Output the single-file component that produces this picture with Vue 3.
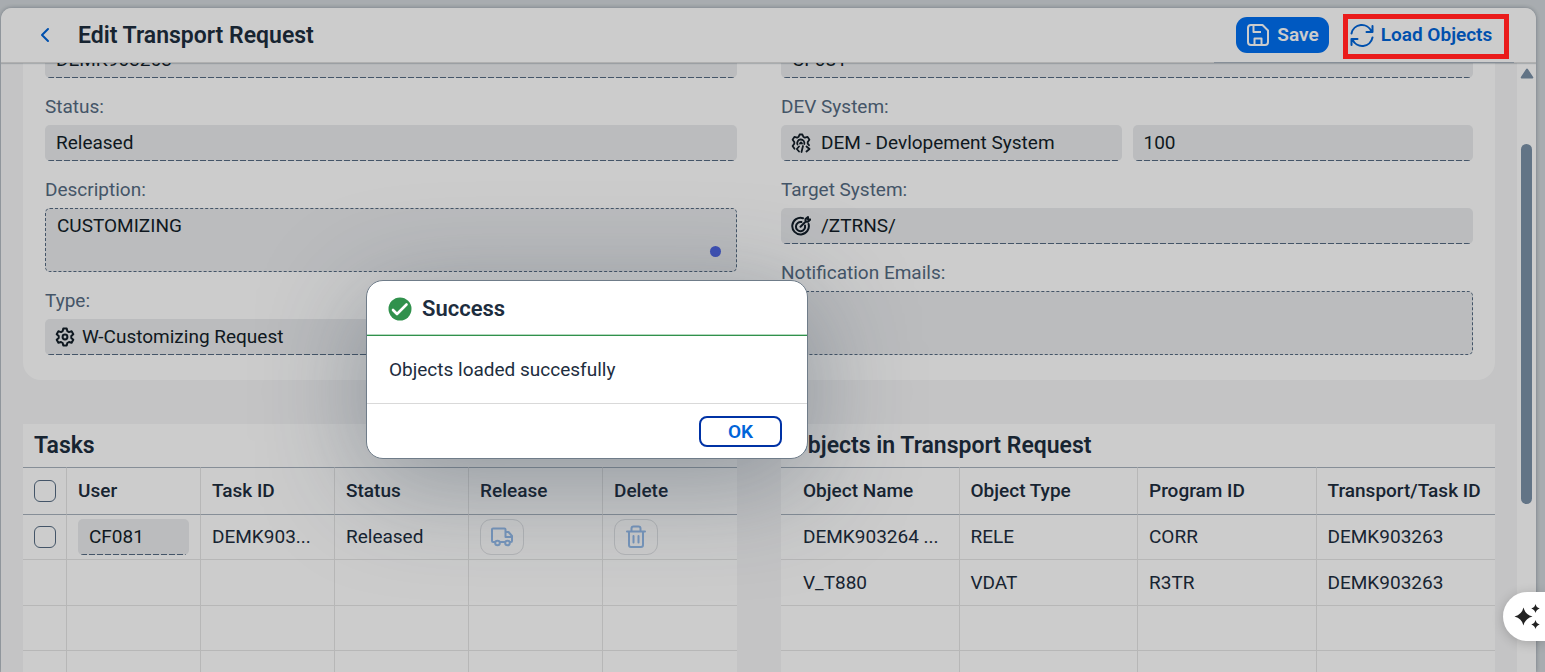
<script setup>
import { ref } from 'vue'

const requestId = ref('DEMK903263')
const owner = ref('CF081')
const status = ref('Released')
const description = ref('CUSTOMIZING')
const requestType = ref('W-Customizing Request')
const devSystem = ref('DEM - Devlopement System')
const client = ref('100')
const target = ref('/ZTRNS/')
const emails = ref('')
const taskUser = ref('CF081')

const objectColumns = ['Object Name', 'Object Type', 'Program ID', 'Transport/Task ID']
const objects = [
  ['DEMK903264 ...', 'RELE', 'CORR', 'DEMK903263'],
  ['V_T880', 'VDAT', 'R3TR', 'DEMK903263'],
  ['', '', '', ''],
  ['', '', '', ''],
  ['', '', '', '']
]
</script>

<template>
  <div class="shell">
    <main class="window">
      <header class="bar">
        <button class="back" type="button" aria-label="Back">
          <svg viewBox="0 0 12 16" width="12" height="16"><path d="M9 2 3 8l6 6" fill="none" stroke="currentColor" stroke-width="2" stroke-linecap="round" stroke-linejoin="round" /></svg>
        </button>
        <h1>Edit Transport Request</h1>
        <div class="actions">
          <button class="save" type="button">
            <svg viewBox="0 0 24 24" width="24" height="24" fill="none" stroke="currentColor" stroke-width="2" stroke-linejoin="round">
              <path d="M2 5a3 3 0 0 1 3-3h11.500L22 7.500V19a3 3 0 0 1-3 3H5a3 3 0 0 1-3-3z" />
              <path d="M7.500 2.500V9H15M8.500 22v-6.500h7V22" />
            </svg>
            Save
          </button>
          <div class="marked">
            <button class="load" type="button">
              <svg viewBox="0 0 24 24" width="24" height="24" fill="none" stroke="currentColor" stroke-width="2" stroke-linecap="round" stroke-linejoin="round">
                <path d="M1.500 10.500A10.500 10.500 0 0 1 21.500 8.500M22.500 3v6h-6" />
                <path d="M22.500 14.500A10.500 10.500 0 0 1 2.500 16.500M1.500 22v-6h6" />
              </svg>
              Load Objects
            </button>
            <span class="marker"></span>
          </div>
        </div>
        <span class="rule"></span>
      </header>

      <div class="view">
        <div class="content">
          <section class="form">
            <div class="col">
              <div class="field"><input v-model="requestId" aria-label="Transport request" readonly></div>
              <label for="status">Status:</label>
              <div class="field"><input id="status" v-model="status" readonly></div>
              <label for="description">Description:</label>
              <div class="area">
                <textarea id="description" v-model="description" readonly></textarea>
                <span class="dot"></span>
              </div>
              <label for="type">Type:</label>
              <div class="field">
                <svg class="icon" viewBox="0 0 20 20" width="20" height="20" fill="none" stroke="currentColor" stroke-width="2" stroke-linejoin="round">
                  <path d="M8.300 1.500h3.400l.6 2.600 1.700 1 2.600-.8 1.700 3-2 1.800v1.900l2 1.800-1.700 3-2.600-.8-1.700 1-.6 2.600H8.300l-.6-2.600-1.700-1-2.600.8-1.700-3 2-1.800V9.100l-2-1.800 1.700-3 2.600.8 1.700-1z" />
                  <circle cx="10" cy="10" r="2.400" />
                </svg>
                <input id="type" v-model="requestType" readonly>
              </div>
            </div>
            <div class="col">
              <div class="field"><input v-model="owner" aria-label="Owner" readonly></div>
              <label for="dev">DEV System:</label>
              <div class="pair">
                <div class="field">
                  <svg class="icon wide" viewBox="0 0 20 20" width="20" height="20" fill="none" stroke="currentColor" stroke-width="1.800" stroke-linecap="round" stroke-linejoin="round">
                    <path d="M3.500 15.800 1.600 13l1.700-2.300V9L1.600 6.800l1.800-2.900 2.700.8 1.600-1L8.600 1.500h2.800l.9 2.200 1.600 1 2.700-.8 1.800 2.900L16.700 9v1.700l1.300 1.500" />
                    <path d="M6.500 11.500A3.600 3.600 0 1 1 13.300 11M9 10.500l1-1 1 1" />
                    <path d="M8 13.500 5.800 16 8 18.500M12 13l-1.500 6M15.500 13.500 18.500 16l-3 2.500" />
                  </svg>
                  <input id="dev" v-model="devSystem" readonly>
                </div>
                <div class="field"><input v-model="client" aria-label="Client" readonly></div>
              </div>
              <label for="target">Target System:</label>
              <div class="field">
                <svg class="icon wide" viewBox="0 0 20 20" width="20" height="20" fill="none" stroke="currentColor" stroke-width="2" stroke-linecap="round" stroke-linejoin="round">
                  <path d="M12 2.200A8.300 8.300 0 1 0 17.600 8" />
                  <path d="M10.500 6.100A4.600 4.600 0 1 0 14 9.500" />
                  <path d="m9.500 10.800 5-5V3L17 1v2.500h2.300l-2.300 2.300h-2.500" />
                </svg>
                <input id="target" v-model="target" readonly>
              </div>
              <label for="emails">Notification Emails:</label>
              <div class="area"><textarea id="emails" v-model="emails" readonly></textarea></div>
            </div>
          </section>

          <div class="tables">
            <section class="panel">
              <h2>Tasks</h2>
              <table class="tasks">
                <thead>
                  <tr>
                    <th class="pick"><input type="checkbox" aria-label="Select all tasks"></th>
                    <th>User</th><th>Task ID</th><th>Status</th><th>Release</th><th>Delete</th>
                  </tr>
                </thead>
                <tbody>
                  <tr>
                    <td class="pick"><input type="checkbox" aria-label="Select task"></td>
                    <td><div class="field"><input v-model="taskUser" aria-label="User" readonly></div></td>
                    <td>DEMK903...</td>
                    <td>Released</td>
                    <td>
                      <button class="tool" type="button" disabled aria-label="Release task">
                        <svg viewBox="0 0 24 24" width="24" height="24" fill="none" stroke="currentColor" stroke-width="2" stroke-linecap="round" stroke-linejoin="round">
                          <path d="M5 17H3a1 1 0 0 1-1-1V4.500a1 1 0 0 1 1-1h11.500a1 1 0 0 1 1 1V12H22v4a1 1 0 0 1-1 1h-.5M10 17h5M15.500 7h3L22 11v1" />
                          <circle cx="7.500" cy="18" r="2.300" /><circle cx="17.500" cy="18" r="2.300" />
                        </svg>
                      </button>
                    </td>
                    <td>
                      <button class="tool" type="button" disabled aria-label="Delete task">
                        <svg viewBox="0 0 24 24" width="24" height="24" fill="none" stroke="currentColor" stroke-width="2" stroke-linecap="round" stroke-linejoin="round">
                          <path d="M3 6.500h18M5 6.500V20a2 2 0 0 0 2 2h10a2 2 0 0 0 2-2V6.500M7.500 6V3.500a2 2 0 0 1 2-2h5a2 2 0 0 1 2 2V6M9.500 11v6.500M14.500 11v6.500" />
                        </svg>
                      </button>
                    </td>
                  </tr>
                  <tr v-for="n in 4" :key="n">
                    <td class="pick"></td><td></td><td></td><td></td><td></td><td></td>
                  </tr>
                </tbody>
              </table>
            </section>
            <section class="panel">
              <h2>Objects in Transport Request</h2>
              <table class="objects">
                <thead>
                  <tr><th v-for="c in objectColumns" :key="c">{{ c }}</th></tr>
                </thead>
                <tbody>
                  <tr v-for="(row, r) in objects" :key="r">
                    <td v-for="(cell, i) in row" :key="i">{{ cell }}</td>
                  </tr>
                </tbody>
              </table>
            </section>
          </div>
        </div>

        <div class="scroll">
          <svg viewBox="0 0 14 12" width="14" height="12"><path d="M7 1.500 12.300 9.500H1.700z" fill="#7b91a8" stroke="#7b91a8" stroke-width="2" stroke-linejoin="round" /></svg>
          <span class="thumb"></span>
        </div>
      </div>
    </main>

    <div class="backdrop"></div>

    <div class="dialog" role="alertdialog" aria-labelledby="dialog-title">
      <div class="dialog-head">
        <svg viewBox="0 0 24 24" width="24" height="24">
          <circle cx="12" cy="12" r="11.500" fill="#30914c" />
          <path d="m5 13 4 4 9.500-9.500" fill="none" stroke="#fff" stroke-width="2.600" stroke-linecap="round" stroke-linejoin="round" />
        </svg>
        <h2 id="dialog-title">Success</h2>
      </div>
      <p>Objects loaded succesfully</p>
      <div class="dialog-foot"><button class="ok" type="button">OK</button></div>
    </div>

    <button class="assistant" type="button" aria-label="Assistant">
      <svg viewBox="0 0 26 26" width="26" height="26" fill="#222">
        <path d="M9.500 4.500q1.600 7 9 9-7.400 2-9 9-1.600-7-9-9 7.400-2 9-9z" />
        <path d="M21.500 1q.7 3.500 4.200 4.500-3.500 1-4.200 4.500-.7-3.500-4.200-4.500 3.500-1 4.200-4.500zM21.500 17q.7 3.500 4.200 4.500-3.500 1-4.200 4.500-.7-3.500-4.200-4.500 3.500-1 4.200-4.500z" />
      </svg>
    </button>
  </div>
</template>

<style>
body { overflow: hidden; }
</style>

<style scoped>
* { box-sizing: border-box; }
.shell {
  position: relative;
  height: 100vh;
  padding: 8px 9px 0 1px;
  overflow: hidden;
  background: #d3d8dc;
  color: #1d2d3e;
  font: 400 19px/22px Roboto, "Liberation Sans", sans-serif;
}
button, input, textarea { font: inherit; color: inherit; margin: 0; }
button { display: flex; align-items: center; justify-content: center; padding: 0; border: 0; background: none; }
svg { display: block; flex: none; }
.window {
  height: 100%;
  display: flex;
  flex-direction: column;
  overflow: hidden;
  border-radius: 11px 11px 0 0;
  background: #f5f6f7;
  box-shadow: 0 0 4px rgba(34, 53, 72, .4);
}
.bar {
  position: relative;
  flex: none;
  display: flex;
  align-items: center;
  height: 55px;
  padding: 0 39px 0 33px;
  background: #fff;
  border-bottom: 1px solid #dcdcdc;
  box-shadow: 0 1px 1px rgba(34, 53, 72, .2);
}
.rule { position: absolute; right: 22px; bottom: -1px; width: 300px; height: 1px; background: #a8b2bd; }
.back { width: 22px; height: 36px; color: #0064d9; }
h1, h2 { margin: 0; font-size: 23px; line-height: 28px; font-weight: 600; }
h1 { margin-left: 22px; padding-top: 1px; }
.actions { display: flex; align-items: center; gap: 14px; margin-left: auto; }
.save, .load { height: 36px; font-weight: 600; gap: 7px; }
.save { width: 93px; border-radius: 11px; background: #0070f2; color: #fff; }
.load { width: 154px; color: #0064d9; }
.marked { position: relative; padding: 0 0 0 1px; margin-right: -1px; }
.marker { position: absolute; z-index: 5; top: -3px; left: 0; width: 166px; height: 45px; border: 5px solid #ea1b1b; pointer-events: none; }
.view { flex: 1; min-height: 0; display: flex; overflow: hidden; }
.content { flex: 1; min-width: 0; padding: 0 22px; }
.form, .tables { display: grid; grid-template-columns: 1fr 1fr; gap: 44px; }
.form { margin-bottom: 44px; padding: 0 22px 25px; background: #fff; border-radius: 0 0 18px 18px; }
.col { min-width: 0; margin-top: -21px; }
label { display: block; padding: 18px 0 7px; color: #556b82; }
.field {
  display: flex;
  align-items: center;
  height: 36px;
  padding: 0 11px;
  border-radius: 5px;
  color: #131e29;
  background:
    repeating-linear-gradient(90deg, #556b82 0 6px, transparent 6px 8px) 3px 100% / calc(100% - 6px) 1px no-repeat,
    #eaecee;
}
.field input { flex: 1; min-width: 0; width: 100%; padding: 0; border: 0; outline: 0; background: none; }
.icon { width: 20px; margin: 0 7px 0 -1px; }
.icon.wide { margin-right: 10px; }
.pair { display: grid; grid-template-columns: 1fr 1fr; gap: 11px; }
.area { position: relative; height: 64px; }
.area textarea { display: block; width: 100%; height: 100%; padding: 6px 11px; border: 1px dashed #556b82; border-radius: 5px; background: #eaecee; color: #131e29; resize: none; outline: 0; }
.dot { position: absolute; z-index: 5; right: 16px; bottom: 15px; width: 11px; height: 11px; border-radius: 50%; background: #3f51b5; }
.panel { min-width: 0; background: #fff; }
.panel h2 { height: 43px; padding: 8px 11px 7px; }
table { width: 100%; table-layout: fixed; border-collapse: separate; border-spacing: 0; }
th, td { height: 46px; padding: 0 11px; text-align: left; font-weight: 400; border-right: 1px solid #e5e5e5; border-bottom: 1px solid #e5e5e5; white-space: nowrap; overflow: hidden; }
tr:nth-child(odd) td { height: 45px; }
th { height: 48px; font-weight: 500; border-top: 1px solid #a8b2bd; border-bottom-color: #a8b2bd; }
th:last-child, td:last-child { border-right: 0; }
.pick { width: 44px; }
.pick input { display: block; appearance: none; width: 22px; height: 22px; border: 1px solid #556b82; border-radius: 6px; background: #fff; }
.objects th:first-child, .objects td:first-child { padding-left: 22px; }
.tool { width: 44px; height: 36px; border: 1px solid #dfe1e4; border-radius: 11px; color: #95bcec; }
.scroll { flex: none; width: 19px; padding-top: 5px; display: flex; flex-direction: column; align-items: center; background: #fff; }
.thumb { width: 11px; height: 360px; margin-top: 64px; border-radius: 6px; background: #7b91a8; }
.backdrop { position: absolute; inset: 0; background: rgba(0, 0, 0, .2); }
.dialog {
  position: absolute;
  z-index: 6;
  top: 280px;
  left: 366px;
  width: 442px;
  border: 1px solid #6f7c89;
  border-radius: 17px;
  background: #fff;
  box-shadow: 0 22px 110px rgba(34, 53, 72, .36);
}
.dialog-head { display: flex; align-items: center; gap: 10px; height: 55px; padding: 2px 21px 0; border-bottom: 1px solid #30914c; box-shadow: inset 0 -1px #b5d9bf; }
.dialog-head h2 { font-size: 22px; }
.dialog p { margin: 0; padding: 23px 22px 22px; border-bottom: 1px solid #d9d9d9; }
.dialog-foot { display: flex; justify-content: flex-end; padding: 12px 25px 11px; }
.ok { width: 83px; height: 31px; border: 2px solid #0032a5; border-radius: 8px; color: #0064d9; font-weight: 600; }
.assistant { position: absolute; z-index: 6; right: 0; top: 592px; width: 42px; height: 49px; padding: 0 0 2px 6px; border-radius: 25px 0 0 25px; background: #fff; box-shadow: 0 2px 12px rgba(0, 0, 0, .2); }
</style>
